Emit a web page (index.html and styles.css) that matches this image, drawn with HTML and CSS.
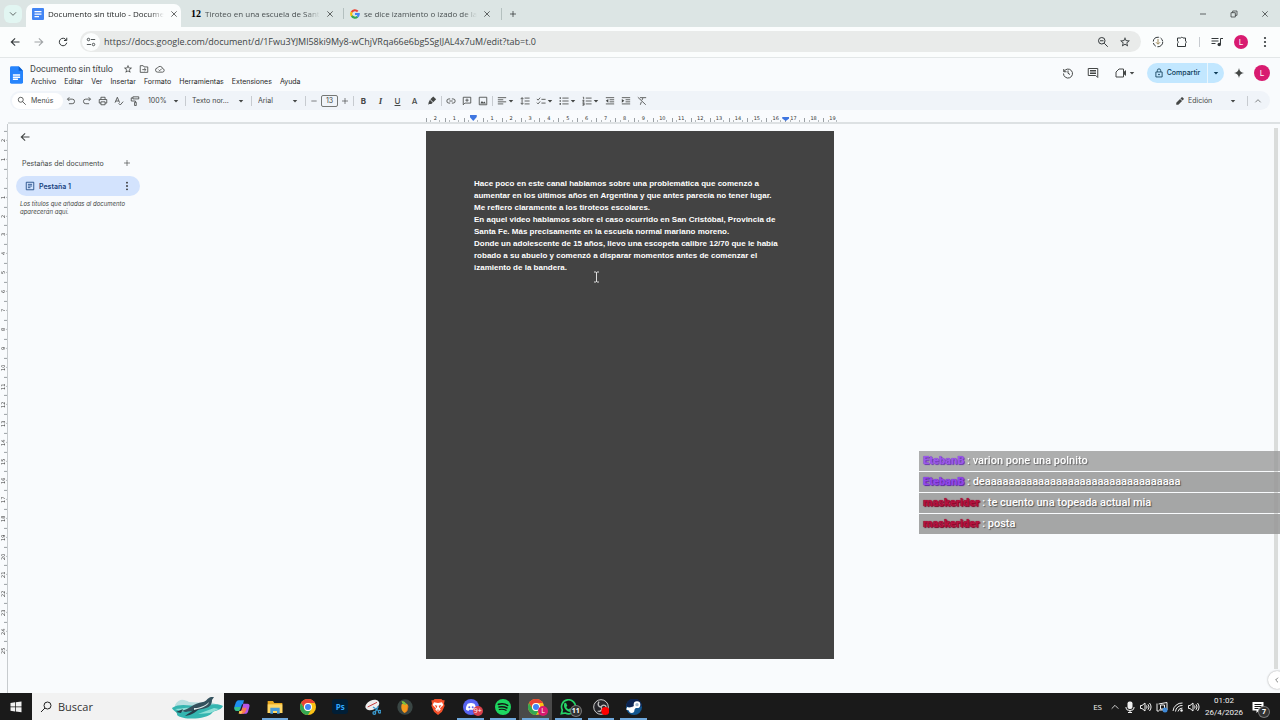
FILE: index.html
```html
<!DOCTYPE html>
<html lang="es">
<head>
<meta charset="UTF-8" />
<meta name="viewport" content="width=device-width, initial-scale=1" />
<title>Documento sin título - Documentos de Google</title>
<link rel="stylesheet" href="styles.css">
</head>
<body>
  <svg class="sprite" aria-hidden="true">
    <symbol id="down" viewBox="0 0 24 24"><path class="ln" d="M3 7l9 9 9-9" stroke-width="4"/></symbol>
    <symbol id="left" viewBox="0 0 24 24"><path class="ln" d="M15 5l-7 7 7 7"/></symbol>
    <symbol id="up" viewBox="0 0 24 24"><path class="ln" d="M4 16l8-8 8 8"/></symbol>
    <symbol id="caret" viewBox="0 0 24 24"><path d="M3 8h18l-9 10z"/></symbol>
    <symbol id="close" viewBox="0 0 24 24"><path class="ln" d="M4 4l16 16M20 4L4 20" stroke-width="3"/></symbol>
    <symbol id="plus" viewBox="0 0 24 24"><path class="ln" d="M12 3v18M3 12h18"/></symbol>
    <symbol id="minus" viewBox="0 0 24 24"><path class="ln" d="M4 12h16"/></symbol>
    <symbol id="back" viewBox="0 0 24 24"><path d="M21 10.800H7.400l5.600-5.400L11.500 4 3 12l8.500 8 1.500-1.400-5.600-5.400H21z"/></symbol>
    <symbol id="reload" viewBox="0 0 24 24"><path class="ln" d="M18.500 8A7.500 7.500 0 1 0 19.500 13.500M19.500 3.500V9H14"/></symbol>
    <symbol id="tune" viewBox="0 0 24 24"><g class="ln"><circle cx="6" cy="6" r="3"/><path d="M12 6h10M2 18h10"/><circle cx="18" cy="18" r="3"/></g></symbol>
    <symbol id="star" viewBox="0 0 24 24"><path d="M22 9.240l-7.190-.62L12 2 9.190 8.630 2 9.240l5.460 4.730L5.820 21 12 17.270 18.180 21l-1.630-7.030L22 9.240zM12 15.400l-3.760 2.270 1-4.280-3.320-2.880 4.380-.38L12 6.100l1.710 4.040 4.380.38-3.320 2.880 1 4.280L12 15.400z"/></symbol>
    <symbol id="search" viewBox="0 0 24 24"><g class="ln"><circle cx="9" cy="9" r="6"/><path d="M13 13l8 8"/></g></symbol>
    <symbol id="zoomout" viewBox="0 0 24 24"><g class="ln"><circle cx="9.500" cy="9.500" r="6.500"/><path d="M14.500 14.500l7 7M6 9.500h7"/></g></symbol>
    <symbol id="download" viewBox="0 0 24 24"><g class="ln"><circle cx="12" cy="12" r="9.500" stroke-dasharray="16 3 8 3"/><path d="M12 6v10M8 12.500l4 4 4-4" stroke="#a08a5a"/></g></symbol>
    <symbol id="puzzle" viewBox="0 0 24 24"><path class="ln" d="M3 4h6a3 3 0 0 1 5 0h5v6a3 3 0 0 1 0 5v6H3v-6a3 3 0 0 0 0-5z"/></symbol>
    <symbol id="playlist" viewBox="0 0 24 24"><g class="ln"><path d="M1 5h14M1 10h14M1 15h8M19 17V5h5"/></g><circle cx="16.500" cy="17" r="3.500"/></symbol>
    <symbol id="dots" viewBox="0 0 24 24"><circle cx="12" cy="4" r="2.200"/><circle cx="12" cy="12" r="2.200"/><circle cx="12" cy="20" r="2.200"/></symbol>
    <symbol id="winmin" viewBox="0 0 24 24"><path class="ln" d="M3 12h18"/></symbol>
    <symbol id="winmax" viewBox="0 0 24 24"><path class="ln" d="M3 8h13v13H3zM8 8V3h13v13h-5"/></symbol>
    <symbol id="docfile" viewBox="0 0 18 24"><path fill="#2684fc" d="M2 0h10l6 6v16a2 2 0 0 1-2 2H2a2 2 0 0 1-2-2V2a2 2 0 0 1 2-2z"/><path fill="#0a60d0" d="M12 0l6 6h-6z"/><path fill="#fff" d="M4 11h10v2H4zM4 14h10v2H4zM4 17h7v2H4z"/></symbol>
    <symbol id="docfav" viewBox="0 0 24 24"><rect width="24" height="24" rx="2" fill="#4285f4"/><path fill="#fff" d="M5 6h14v2.500H5zM5 11h14v2.500H5zM5 16h9v2.500H5z"/></symbol>
    <symbol id="google" viewBox="0 0 24 24"><g fill="none" stroke-width="5"><path stroke="#ea4335" d="M4 7.500A9 9 0 0 1 18.500 6"/><path stroke="#fbbc05" d="M4.500 17A9 9 0 0 1 4 7.500"/><path stroke="#34a853" d="M18 18.500A9 9 0 0 1 4.300 16.500"/><path stroke="#4285f4" d="M12 12h9a9 9 0 0 1-3.200 6.700"/></g></symbol>
    <symbol id="move" viewBox="0 0 24 24"><path class="ln" d="M3 4h7l2 3h9v13H3zM8 13.500h8M13 10l3.500 3.500L13 17"/></symbol>
    <symbol id="cloud" viewBox="0 0 24 24"><path class="ln" d="M6.500 19.500a5 5 0 0 1-.5-10 6.500 6.500 0 0 1 12.300 1.500 4.300 4.300 0 0 1 .2 8.500zM8.500 13.500l2.700 2.700 5-5"/></symbol>
    <symbol id="history" viewBox="0 0 24 24"><path class="ln" d="M3.500 4v5.500H9M4 9a9 9 0 1 1-1 4M12 7v5.500l4 2.500"/></symbol>
    <symbol id="comment" viewBox="0 0 24 24"><path class="ln" d="M2.500 3h19v18l-4-4h-15zM6 7h12M6 10h12M6 13h12"/></symbol>
    <symbol id="video" viewBox="0 0 24 24"><path class="ln" d="M8 4h9v16H2V10z"/><path d="M17 10l5-4v12l-5-4z"/></symbol>
    <symbol id="lock" viewBox="0 0 24 24"><path class="ln" d="M4.500 9.500h15v12h-15zM8 9V6a4 4 0 0 1 8 0v3"/><circle cx="12" cy="15.500" r="2"/></symbol>
    <symbol id="spark" viewBox="0 0 24 24"><path d="M12 0c1 7 5 11 12 12-7 1-11 5-12 12-1-7-5-11-12-12C7 11 11 7 12 0z"/></symbol>
    <symbol id="undo" viewBox="0 0 24 24"><path class="ln" d="M8 3L3.500 7.500 8 12M4 7.500h11a5.500 5.500 0 0 1 0 11H7"/></symbol>
    <symbol id="redo" viewBox="0 0 24 24"><path class="ln" d="M16 3l4.500 4.500L16 12M20 7.500H9a5.500 5.500 0 0 0 0 11h8"/></symbol>
    <symbol id="print" viewBox="0 0 24 24"><path class="ln" d="M7 8V3h10v5M7 17H3V8.500h18V17h-4M7 14h10v7H7z"/></symbol>
    <symbol id="spell" viewBox="0 0 24 24"><path class="ln" d="M2.500 16L8 3l5.500 13M4.500 12h7M11 17.500l4 4 7-8"/></symbol>
    <symbol id="paint" viewBox="0 0 24 24"><path class="ln" d="M7 2h14v5H7zM7 4.500H3V12h10v3M11 15h4v8h-4z"/></symbol>
    <symbol id="marker" viewBox="0 0 24 24"><path d="M15 1l7 7-7 7-7-7zM7 9l7 7-4 3H6l-3 2 1-6z"/></symbol>
    <symbol id="link" viewBox="0 0 24 24"><path class="ln" d="M10 7H7a5 5 0 0 0 0 10h3M14 7h3a5 5 0 0 1 0 10h-3M8 12h8"/></symbol>
    <symbol id="addcomment" viewBox="0 0 24 24"><path class="ln" d="M3 3h18v14H7l-4 4zM12 6v8M8 10h8"/></symbol>
    <symbol id="image" viewBox="0 0 24 24"><path class="ln" d="M3 3h18v18H3z"/><path d="M5.500 18l4-6 3 4 2.500-3 4 5z"/></symbol>
    <symbol id="align" viewBox="0 0 24 24"><path class="ln" d="M2 4h20M2 9h13M2 14h20M2 19h13"/></symbol>
    <symbol id="spacing" viewBox="0 0 24 24"><path class="ln" d="M11 5h12M11 12h12M11 19h12M5 4v16M1.500 7.500L5 4l3.500 3.500M1.500 16.500L5 20l3.500-3.500"/></symbol>
    <symbol id="checks" viewBox="0 0 24 24"><path class="ln" d="M2 7l3 3 5-6M2 16l3 3 5-6M13 8h10M13 17h10"/></symbol>
    <symbol id="bullets" viewBox="0 0 24 24"><path class="ln" d="M8 5h15M8 12h15M8 19h15"/><circle cx="3" cy="5" r="2"/><circle cx="3" cy="12" r="2"/><circle cx="3" cy="19" r="2"/></symbol>
    <symbol id="numbers" viewBox="0 0 24 24"><path class="ln" d="M9 5h14M9 12h14M9 19h14"/><path class="ln" d="M2 3h2v5M1 10.500h4l-3 4h4M1 17h4v5H1M2 19.500h3"/></symbol>
    <symbol id="outdent" viewBox="0 0 24 24"><path class="ln" d="M2 4h20M11 9h11M11 14h11M2 19h20"/><path d="M8 7v9l-6-4.500z"/></symbol>
    <symbol id="indent" viewBox="0 0 24 24"><path class="ln" d="M2 4h20M11 9h11M11 14h11M2 19h20"/><path d="M2 7v9l6-4.500z"/></symbol>
    <symbol id="clear" viewBox="0 0 24 24"><path class="ln" d="M7 4h15M14 5l-2 5M10.500 14L8 21M2 3l19 18"/></symbol>
    <symbol id="pencil" viewBox="0 0 24 24"><path d="M3 21v-5L12 7l5 5-9 9zM13 6l3-3h2l3 3v2l-3 3z"/></symbol>
    <symbol id="tabdoc" viewBox="0 0 24 24"><path class="ln" d="M3 3h18v18H3zM7 8h10M7 12h10M7 16h6"/></symbol>
    <symbol id="volume" viewBox="0 0 24 24"><path class="ln" d="M1 9h3l6-5v16l-6-5H1zM13 9a5 5 0 0 1 0 6M16 6.500a9 9 0 0 1 0 11M19 4a13 13 0 0 1 0 16"/></symbol>
  </svg>

  <header class="tabstrip">
    <button class="tab-search" aria-label="Buscar pestañas"><svg class="i8"><use href="#down"/></svg></button>
    <div class="tabs">
      <div class="tab active">
        <svg class="i12"><use href="#docfav"/></svg>
        <span class="tab-title">Documento sin título - Docume</span>
        <button aria-label="Cerrar"><svg class="i8"><use href="#close"/></svg></button>
      </div>
      <div class="tab">
        <b class="fav12">12</b>
        <span class="tab-title">Tiroteo en una escuela de Sant</span>
        <button aria-label="Cerrar"><svg class="i8"><use href="#close"/></svg></button>
      </div>
      <div class="tab">
        <svg class="i10"><use href="#google"/></svg>
        <span class="tab-title">se dice izamiento o izado de la</span>
        <button aria-label="Cerrar"><svg class="i8"><use href="#close"/></svg></button>
      </div>
    </div>
    <button class="new-tab" aria-label="Nueva pestaña"><svg class="i8"><use href="#plus"/></svg></button>
    <div class="win-buttons">
      <button aria-label="Minimizar"><svg class="i8"><use href="#winmin"/></svg></button>
      <button aria-label="Restaurar"><svg class="i8"><use href="#winmax"/></svg></button>
      <button aria-label="Cerrar ventana"><svg class="i8"><use href="#close"/></svg></button>
    </div>
  </header>

  <div class="navbar">
    <button aria-label="Atrás"><svg class="i12"><use href="#back"/></svg></button>
    <button class="forward" aria-label="Adelante"><svg class="i12"><use href="#back"/></svg></button>
    <button aria-label="Recargar"><svg class="i12"><use href="#reload"/></svg></button>
    <div class="omnibox">
      <button class="site-info" aria-label="Información del sitio"><svg class="i10"><use href="#tune"/></svg></button>
      <input type="text" aria-label="Dirección" value="https://docs.google.com/document/d/1Fwu3YJMl58ki9My8-wChjVRqa66e6bg5SgIJAL4x7uM/edit?tab=t.0" />
      <button aria-label="Zoom"><svg class="i12"><use href="#zoomout"/></svg></button>
      <button aria-label="Favoritos"><svg class="i12"><use href="#star"/></svg></button>
    </div>
    <div class="nav-right">
      <button aria-label="Descargas"><svg class="i12"><use href="#download"/></svg></button>
      <button aria-label="Extensiones"><svg class="i12"><use href="#puzzle"/></svg></button>
      <span class="sep"></span>
      <button aria-label="Multimedia"><svg class="i12"><use href="#playlist"/></svg></button>
      <button aria-label="Perfil"><span class="avatar small">L</span></button>
      <button aria-label="Menú"><svg class="i12"><use href="#dots"/></svg></button>
    </div>
  </div>

  <div class="docs-header">
    <svg class="docs-logo"><use href="#docfile"/></svg>
    <div class="docs-title">
      <div class="title-row">
        <h1>Documento sin título</h1>
        <button aria-label="Destacar"><svg class="i10"><use href="#star"/></svg></button>
        <button aria-label="Mover"><svg class="i10"><use href="#move"/></svg></button>
        <button aria-label="Estado"><svg class="i10"><use href="#cloud"/></svg></button>
      </div>
      <nav>
        <a href="#">Archivo</a>
        <a href="#">Editar</a>
        <a href="#">Ver</a>
        <a href="#">Insertar</a>
        <a href="#">Formato</a>
        <a href="#">Herramientas</a>
        <a href="#">Extensiones</a>
        <a href="#">Ayuda</a>
      </nav>
    </div>
    <div class="docs-actions">
      <button class="wide-btn" aria-label="Historial"><svg class="i12"><use href="#history"/></svg></button>
      <button class="wide-btn" aria-label="Comentarios"><svg class="i12"><use href="#comment"/></svg></button>
      <button class="meet" aria-label="Reunión"><svg class="i12"><use href="#video"/></svg><svg class="i6"><use href="#caret"/></svg></button>
      <div class="share">
        <button class="share-main"><svg class="i10"><use href="#lock"/></svg>Compartir</button>
        <button class="share-more" aria-label="Más opciones"><svg class="i6"><use href="#caret"/></svg></button>
      </div>
      <button class="gemini" aria-label="Gemini"><svg class="i10"><use href="#spark"/></svg></button>
      <button aria-label="Cuenta"><span class="avatar">L</span></button>
    </div>
  </div>

  <div class="toolbar">
    <button class="menus"><svg class="i10"><use href="#search"/></svg>Menús</button>
    <button aria-label="Deshacer"><svg><use href="#undo"/></svg></button>
    <button aria-label="Rehacer"><svg><use href="#redo"/></svg></button>
    <button aria-label="Imprimir"><svg><use href="#print"/></svg></button>
    <button aria-label="Ortografía"><svg><use href="#spell"/></svg></button>
    <button aria-label="Copiar formato"><svg><use href="#paint"/></svg></button>
    <label class="drop zoom"><select aria-label="Zoom"><option>100%</option></select><svg class="i6"><use href="#caret"/></svg></label>
    <span class="sep"></span>
    <label class="drop wide"><select aria-label="Estilos"><option>Texto nor...</option></select><svg class="i6"><use href="#caret"/></svg></label>
    <span class="sep"></span>
    <label class="drop"><select aria-label="Fuente"><option>Arial</option></select><svg class="i6"><use href="#caret"/></svg></label>
    <span class="sep"></span>
    <button class="step" aria-label="Reducir"><svg class="i8"><use href="#minus"/></svg></button>
    <input class="size" type="text" aria-label="Tamaño de fuente" value="13" />
    <button class="step" aria-label="Aumentar"><svg class="i8"><use href="#plus"/></svg></button>
    <span class="sep"></span>
    <button class="glyph"><b>B</b></button>
    <button class="glyph"><i>I</i></button>
    <button class="glyph"><u>U</u></button>
    <button class="glyph">A</button>
    <button class="glyph" aria-label="Resaltar"><svg><use href="#marker"/></svg></button>
    <span class="sep"></span>
    <button aria-label="Enlace"><svg><use href="#link"/></svg></button>
    <button aria-label="Añadir comentario"><svg><use href="#addcomment"/></svg></button>
    <button aria-label="Imagen"><svg><use href="#image"/></svg></button>
    <span class="sep"></span>
    <button class="split" aria-label="Alinear"><svg><use href="#align"/></svg><svg class="i6"><use href="#caret"/></svg></button>
    <button aria-label="Interlineado"><svg><use href="#spacing"/></svg></button>
    <button class="split" aria-label="Lista de control"><svg><use href="#checks"/></svg><svg class="i6"><use href="#caret"/></svg></button>
    <button class="split" aria-label="Viñetas"><svg><use href="#bullets"/></svg><svg class="i6"><use href="#caret"/></svg></button>
    <button class="split" aria-label="Numeración"><svg><use href="#numbers"/></svg><svg class="i6"><use href="#caret"/></svg></button>
    <button aria-label="Reducir sangría"><svg><use href="#outdent"/></svg></button>
    <button aria-label="Aumentar sangría"><svg><use href="#indent"/></svg></button>
    <button aria-label="Borrar formato"><svg><use href="#clear"/></svg></button>
    <div class="mode">
      <svg><use href="#pencil"/></svg>
      <label class="drop"><select aria-label="Modo"><option>Edición</option></select><svg class="i6"><use href="#caret"/></svg></label>
      <span class="sep"></span>
      <button aria-label="Ocultar menús"><svg class="i8"><use href="#up"/></svg></button>
    </div>
  </div>

  <div class="ruler-row"><div class="ruler" id="rulerH"></div></div>

  <main>
    <div class="ruler-side"><div class="ruler" id="rulerV"></div></div>
    <aside>
      <button class="aside-back" aria-label="Cerrar panel"><svg class="i12"><use href="#back"/></svg></button>
      <div class="aside-head">
        <h2>Pestañas del documento</h2>
        <button aria-label="Añadir pestaña"><svg class="i8"><use href="#plus"/></svg></button>
      </div>
      <div class="doc-tab">
        <svg class="i10"><use href="#tabdoc"/></svg>
        <a href="#">Pestaña 1</a>
        <button aria-label="Opciones"><svg class="i10"><use href="#dots"/></svg></button>
      </div>
      <p>Los títulos que añadas al documento aparecerán aquí.</p>
    </aside>
    <article>
      <p>Hace poco en este canal hablamos sobre una problemática que comenzó a<br>aumentar en los últimos años en Argentina y que antes parecía no tener lugar.<br>Me refiero claramente a los tiroteos escolares.</p>
      <p>En aquel video hablamos sobre el caso ocurrido en San Cristóbal, Provincia de<br>Santa Fe. Más precisamente en la escuela normal mariano moreno.</p>
      <p>Donde un adolescente de 15 años, llevo una escopeta calibre 12/70 que le había<br>robado a su abuelo y comenzó a disparar momentos antes de comenzar el<br>izamiento de la bandera.</p>
      <svg class="cursor" viewBox="0 0 7 12"><path d="M1 1h2l.5.5L4 1h2M3.500 1v10M1 11h2l.5-.5.5.5h2"/></svg>
    </article>
    <div class="scrollbar"></div>
    <button class="panel-toggle" aria-label="Mostrar panel"><svg class="i8"><use href="#left"/></svg></button>
    <ul class="chat">
      <li class="old"><b class="purple">EtebanB</b> : varion pone una polnito</li>
      <li><b class="purple">EtebanB</b> : deaaaaaaaaaaaaaaaaaaaaaaaaaaaaaaaaa</li>
      <li><b class="red">maskerider</b> : te cuento una topeada actual mia</li>
      <li><b class="red">maskerider</b> : posta</li>
    </ul>
  </main>

  <footer>
    <button class="start" aria-label="Inicio"><svg class="i12" viewBox="0 0 24 24"><path d="M1 4l9-1.500V11H1zM11.500 2.300L23 1v10H11.500zM1 12.500h9V21l-9-1.500zM11.500 12.500H23v10l-11.500-1.500z"/></svg></button>
    <label class="search">
      <svg viewBox="0 0 24 24"><circle cx="15" cy="9" r="7"/><path d="M10 14l-8 8"/></svg>
      <input type="text" placeholder="Buscar" />
      <svg class="penguin" viewBox="0 0 52 24">
        <path fill="#b9dfe0" d="M3 10c4-7 9-6 14-3l20 1c5-1 9 2 10 6H3z"/>
        <path fill="#35b5b0" d="M0 13c8-5 17-2 25-2s20-4 26 0c-2 5-9 4-11 7-4 6-28 8-35 2 1-3-4-4-5-7z"/>
        <path fill="#8fe0d8" d="M3 14c6 0 10-2 15-1l-7 4zM26 19l16-6 5 1-9 4z"/>
        <path fill="#34525e" d="M9 16c8-1 12-8 22-9 3 0 4-4 8-5l3 0-2 3c0 4-2 7-6 8-7 2-15 3-20 4z"/>
        <path fill="#263e4a" d="M24 12c-2 4-8 6-11 9 7-1 12-4 15-9zM4 17l7-3-2 4z"/>
        <path fill="#d8e6e6" d="M22 13c5 0 11-2 15-6-1 4-7 6-15 8z"/>
      </svg>
    </label>
    <div class="apps">
      <button aria-label="Copilot"><svg viewBox="0 0 24 24"><path fill="#1d8ff0" d="M7 2h8l-4 14H3c-3 0-3-3-2-6l2-5c1-2 2-3 4-3z"/><path fill="#36c28b" d="M1 12h9l-2 6H4c-3 0-4-3-3-6z"/><path fill="#b455e6" d="M13 7h7c3 0 4 2 3 5l-2 7c-1 2-2 3-4 3H9z"/><path fill="#fa7850" d="M12 13h7l-2 7-3 2H9z"/><path fill="#fbc84a" d="M8 18h5l-2 4H7z"/><path fill="#1a1a1a" d="M12 8h2l-3 9H9z"/></svg></button>
      <button class="running" aria-label="Explorador"><svg viewBox="0 0 24 24"><path fill="#e9a820" d="M1 3h8l2 3h12v15H1z"/><path fill="#ffd766" d="M1 8h22v13H1z"/><path fill="#4a9bd8" d="M5 13h14v9h-4v-4H9v4H5z"/></svg></button>
      <button aria-label="Chrome"><svg viewBox="0 0 24 24" id="chrome"><circle cx="12" cy="12" r="12" fill="#fbc116"/><path fill="#ea4335" d="M1.600 6A12 12 0 0 1 22.400 6H12a6 6 0 0 0-5.200 9z"/><path fill="#34a853" d="M1.600 6l5.200 9A6 6 0 0 0 17.200 15L12 24A12 12 0 0 1 1.600 6z"/><circle cx="12" cy="12" r="6" fill="#fff"/><circle cx="12" cy="12" r="4.500" fill="#4285f4"/></svg></button>
      <button aria-label="Photoshop"><span class="ps">Ps</span></button>
      <button aria-label="Recortes"><svg viewBox="0 0 24 24"><ellipse cx="11" cy="9" rx="11" ry="7" transform="rotate(-25 11 9)" fill="#eee"/><path stroke="#c83c3c" stroke-width="1.500" d="M4 12l14-7"/><g fill="none" stroke="#3b9bd0" stroke-width="2"><path d="M12 12l9 6M20 11l-5 9"/><circle cx="14" cy="21" r="2"/><circle cx="22" cy="19" r="2"/></g></svg></button>
      <button aria-label="FL Studio"><svg viewBox="0 0 24 24"><circle cx="12" cy="12" r="11.500" fill="#3a4644"/><path fill="#f49a1c" d="M7 8c5-3 9-1 10 3 0 5-2 9-6 10-5-3-5-9-4-13z"/><path fill="#d8621a" d="M12 21c3-3 5-8 3-13 3 4 2 11-3 13z"/><path fill="#7bbf3f" d="M7 3c4 0 6 2 7 6-4 0-7-2-7-6z"/></svg></button>
      <button aria-label="Brave"><svg viewBox="0 0 24 24"><path fill="#f4502a" d="M7 0h10l2 2h3l-1 5 1 3-4 9-6 5-6-5-4-9 1-3-1-5h3z"/><path fill="#fff" d="M6 5l6 1 6-1 2 4-5 5 1 2-4 3-4-3 1-2-5-5z"/><path fill="#f4502a" d="M7 9l4 1-1 4zM17 9l-4 1 1 4zM10 16h4l-2 2z"/></svg></button>
      <button class="running" aria-label="Discord"><svg viewBox="0 0 24 24"><circle cx="12" cy="12" r="12" fill="#5865f2"/><path fill="#fff" d="M7 7c3-1.500 7-1.500 10 0 2 3 3 6 2.500 9L16 18l-1.500-2h-5L8 18l-3.500-2C4 13 5 10 7 7z"/><circle cx="9.500" cy="12.500" r="1.500" fill="#5865f2"/><circle cx="14.500" cy="12.500" r="1.500" fill="#5865f2"/></svg><span class="badge red-badge">9+</span></button>
      <button class="running" aria-label="Spotify"><svg viewBox="0 0 24 24"><circle cx="12" cy="12" r="12" fill="#1ed760"/><g fill="none" stroke="#141414" stroke-linecap="round"><path stroke-width="2.500" d="M5 8c5-1.500 10-1 14 1.500"/><path stroke-width="2.200" d="M6 12c4-1 8-.6 12 1.500"/><path stroke-width="1.800" d="M6.500 15.800c4-.9 7-.5 10 1.200"/></g></svg></button>
      <button class="running current" aria-label="Chrome, perfil L"><svg viewBox="0 0 24 24"><circle cx="12" cy="12" r="12" fill="#fbc116"/><path fill="#ea4335" d="M1.600 6A12 12 0 0 1 22.400 6H12a6 6 0 0 0-5.200 9z"/><path fill="#34a853" d="M1.600 6l5.200 9A6 6 0 0 0 17.200 15L12 24A12 12 0 0 1 1.600 6z"/><circle cx="12" cy="12" r="6" fill="#fff"/><circle cx="12" cy="12" r="4.500" fill="#4285f4"/></svg><span class="badge pink-badge">L</span></button>
      <button class="running" aria-label="WhatsApp"><svg viewBox="0 0 24 24"><path fill="#141414" stroke="#25d366" stroke-width="2.500" d="M2 22l1.500-5.500A10.500 10.500 0 1 1 8 21z"/><path fill="#25d366" d="M7 6l2-.5L11 10l-1.500 2c1 2 2 3 4 3.500L15 14l4 2c0 3-3 4-5 3-5-1-8-6-8-9 0-2 0-3 1-4z"/></svg><span class="badge dark-badge">11</span></button>
      <button class="running" aria-label="OBS"><svg viewBox="0 0 24 24"><circle cx="12" cy="12" r="11" fill="#26262b" stroke="#c9c9c9" stroke-width="1.500"/><g fill="none" stroke="#c0c0c0" stroke-width="2"><path d="M9 4c-3 5 0 8 3 8M12 12c2-4 7-4 8 1M12 12c3 3 0 8-5 6"/></g><circle cx="18.500" cy="18" r="6" fill="#f00"/></svg></button>
      <button class="running" aria-label="Steam"><svg viewBox="0 0 24 24"><circle cx="12" cy="12" r="12" fill="#12568f"/><path fill="#0b2350" d="M0 11a12 12 0 0 1 24 0L12 14z"/><path stroke="#fff" stroke-width="4" d="M1 14l8 3 6-7"/><circle cx="16.500" cy="8.500" r="5" fill="#fff"/><circle cx="8.500" cy="17" r="4" fill="#fff"/><circle cx="16.500" cy="8.500" r="2.500" fill="#9db4c8"/></svg></button>
    </div>
    <div class="tray">
      <span class="lang">ES</span>
      <svg class="i10"><use href="#up"/></svg>
      <svg class="i12" viewBox="0 0 24 24"><rect x="7" y="1" width="10" height="15" rx="4"/><path class="ln" d="M4 12v2a8 5 0 0 0 16 0v-2M12 19v4M8 23h8"/></svg>
      <svg class="i12"><use href="#volume"/></svg>
      <svg class="i12" viewBox="0 0 24 24"><path class="ln" d="M5 6l17-3v15H6M2 5v15h4M9 8h8v8H9z"/><circle cx="18" cy="18" r="5" fill="#3f8ad8"/></svg>
      <svg class="i12" viewBox="0 0 24 24"><path class="ln" d="M2 20A18 18 0 0 1 21 4M7 21A13 13 0 0 1 21 9M12 21a9 9 0 0 1 9-7"/><circle cx="19" cy="19" r="2.500"/></svg>
      <svg class="i12"><use href="#volume"/></svg>
      <time>01:02<br>26/4/2026</time>
      <div class="notif"><svg class="i12" viewBox="0 0 24 24"><path fill="#fff" d="M1 2h22v17h-9l-5 5v-5H1z"/><path stroke="#1a1a1a" stroke-width="2" d="M5 7h14M5 11h14M5 15h8"/></svg><span class="badge dark-badge">7</span></div>
    </div>
  </footer>

  <script>
    // one cell per centimetre, 0 is the margin marker
    function drawRuler(id, last) {
      const ruler = document.getElementById(id);
      for (let n = -2; n <= last; n++) {
        const cell = document.createElement('span');
        cell.textContent = n === 0 ? '' : Math.abs(n);
        if (n === 0) cell.classList.add('zero');
        if (n === 17) cell.classList.add('end');
        ruler.appendChild(cell);
      }
    }
    drawRuler('rulerH', 19);
    drawRuler('rulerV', 25);
  </script>
</body>
</html>
```
FILE: styles.css
```css
* { box-sizing: border-box; }
body {
  margin: 0;
  height: 100vh;
  display: flex;
  flex-direction: column;
  overflow: hidden;
  font-family: Inter, Roboto, sans-serif;
  font-size: 7px;
  background: #f9fbfd;
  color: #444746;
}
button, input, select {
  font: inherit;
  color: inherit;
  background: none;
  border: none;
  padding: 0;
  margin: 0;
  outline: none;
}
button {
  display: flex;
  align-items: center;
  justify-content: center;
  flex-shrink: 0;
}
a { color: inherit; text-decoration: none; }
h1, h2, p, ul { margin: 0; padding: 0; }
svg { fill: currentColor; flex-shrink: 0; display: block; }
.ln { fill: none; stroke: currentColor; stroke-width: 2px; }
.sprite { position: absolute; width: 0; height: 0; }
.i6 { width: 6px; height: 6px; }
.i8 { width: 8px; height: 8px; }
.i10 { width: 10px; height: 10px; }
.i12 { width: 12px; height: 12px; }
.sep { width: 1px; height: 10px; background: #c7cbd0; flex-shrink: 0; }

/* browser tabs */
.tabstrip {
  display: flex;
  align-items: center;
  height: 27px;
  padding-left: 4px;
  background: #dce5e4;
  color: #1f2222;
  font-family: "Open Sans", "Noto Sans", sans-serif;
  font-size: 8px;
}
.tabstrip .ln { stroke-width: 3px; }
.tab-search {
  width: 18px;
  height: 18px;
  border-radius: 6px;
  background: #e2f6f2;
}
.tabs { display: flex; align-self: flex-end; margin-left: 4px; }
.tab {
  display: flex;
  align-items: center;
  gap: 4px;
  width: 158px;
  height: 23px;
  padding: 0 8px 4px 6px;
  color: #4a5152;
}
.tab.active {
  width: 155px;
  margin-right: 4px;
  padding: 0 5px 4px 6px;
  border-radius: 7px 7px 0 0;
  background: #fbfdfd;
  color: #1f2222;
}
.tab button { width: 12px; height: 12px; color: #1f2222; }
.tab-title {
  flex: 1;
  white-space: nowrap;
  mask-image: linear-gradient(to right, #000 88%, transparent);
}
.tab + .tab + .tab { background: linear-gradient(#b4c0bf, #b4c0bf) 0 4px / 1px 11px no-repeat; padding-left: 7px; }
.fav12 { width: 11px; font-family: "Liberation Serif", serif; font-size: 10px; color: #000; }
.new-tab { width: 22px; height: 12px; border-left: 1px solid #b4c0bf; }
.win-buttons { display: flex; margin-left: auto; }
.win-buttons button { width: 31px; height: 27px; }

/* address bar */
.navbar {
  display: flex;
  align-items: center;
  height: 31px;
  padding: 0 3px 1px 3px;
  background: #fbfdfd;
  border-bottom: 1px solid #e3e7e8;
  color: #33383a;
}
.navbar > button { width: 24px; height: 20px; }
.forward { transform: scaleX(-1); color: #a0a4a6; }
.omnibox {
  flex: 1;
  display: flex;
  align-items: center;
  gap: 2px;
  height: 21px;
  margin-left: 5px;
  padding: 0 6px 0 2px;
  border-radius: 11px;
  background: #e9ebea;
}
.omnibox button { width: 20px; height: 18px; }
.omnibox .site-info { width: 18px; background: #fbfdfd; border-radius: 50%; margin-right: 2px; }
.omnibox input { flex: 1; font-family: "Open Sans", "Noto Sans", sans-serif; font-size: 9px; color: #404546; }
.nav-right { display: flex; align-items: center; margin-left: 5px; }
.nav-right button { width: 24px; height: 20px; }
.nav-right .sep { margin: 0 5px; }
.avatar {
  width: 16px;
  height: 16px;
  border-radius: 50%;
  background: #d81b70;
  color: #fff;
  font-size: 8px;
  line-height: 16px;
  text-align: center;
}
.avatar.small { width: 14px; height: 14px; line-height: 14px; }

/* docs header */
.docs-header { display: flex; align-items: center; height: 33px; padding: 0 10px; }
.docs-logo { width: 13px; height: 18px; margin-right: 7px; }
.docs-title { display: flex; flex-direction: column; gap: 2px; }
.title-row { display: flex; align-items: center; gap: 6px; height: 12px; }
h1 { font-family: Roboto, sans-serif; font-size: 9px; font-weight: 400; margin-right: 4px; }
nav { display: flex; gap: 8px; padding-left: 1px; line-height: 9px; color: #1f1f1f; }
.docs-actions { display: flex; align-items: center; margin: 0 0 4px auto; gap: 9px; }
.docs-actions > button { height: 20px; }
.wide-btn { width: 16px; }
.meet { gap: 2px; margin-left: 5px; }
.gemini { width: 12px; }
.share {
  display: flex;
  height: 20px;
  margin-left: 3px;
  border-radius: 10px;
  overflow: hidden;
  background: #c2e7ff;
  color: #0b3a56;
  font-weight: 500;
}
.share-main { gap: 3px; width: 61px; border-right: 1px solid #eaf6fd; }
.share-more { width: 16px; }

/* toolbar */
.toolbar {
  display: flex;
  align-items: center;
  height: 19px;
  margin: 0 10px;
  padding-left: 2px;
  border-radius: 10px;
  background: #f0f4f9;
}
.toolbar svg { width: 10px; height: 10px; }
.toolbar svg.i6 { width: 6px; height: 6px; }
.toolbar svg.i8 { width: 8px; height: 8px; }
.toolbar button { width: 16px; height: 16px; }
.toolbar button.menus {
  width: 51px;
  gap: 4px;
  justify-content: flex-start;
  padding-left: 5px;
  background: #fff;
  border-radius: 8px;
}
.toolbar button.step { width: 14px; }
.toolbar button.split { width: 23px; gap: 1px; }
.toolbar button.glyph { width: 17px; }
.toolbar .sep { margin: 0 1px; }
.drop { display: flex; align-items: center; width: 51px; padding: 0 6px 0 5px; }
.drop select { flex: 1; min-width: 0; appearance: none; }
.drop.zoom { width: 41px; padding: 0 5px; }
.drop.wide { width: 63px; }
.size { width: 17px; height: 12px; border: 1px solid #747775; border-radius: 2px; text-align: center; }
.glyph { font-size: 8px; font-weight: 500; }
.glyph b { font-weight: 700; }
.glyph i { font-family: "Liberation Serif", serif; font-size: 9px; font-weight: 700; }
.mode { display: flex; align-items: center; margin-left: auto; padding-right: 4px; }
.mode .drop { width: 60px; padding: 0 9px 0 3px; }
.mode .sep { margin: 0 2px; }

/* rulers */
.ruler-row {
  display: flex;
  justify-content: center;
  height: 14px;
  margin-left: 8px;
  padding-right: 20px;
  border-bottom: 2px solid #dde1e3;
}
.ruler { display: flex; font-family: "DejaVu Sans", sans-serif; font-size: 5px; color: #333; }
.ruler span {
  flex: 1;
  text-align: center;
  background:
    linear-gradient(#9aa0a4, #9aa0a4) 0 100% / 1px 4px no-repeat,
    linear-gradient(#b4b9bc, #b4b9bc) 25% 100% / 1px 2px no-repeat,
    linear-gradient(#b4b9bc, #b4b9bc) 75% 100% / 1px 2px no-repeat;
}
#rulerH { width: 416px; padding-top: 5px; line-height: 6px; }
#rulerH .zero::before, #rulerH .end::before {
  content: "";
  display: block;
  width: 7px;
  height: 6px;
  margin: 0 auto;
  background: #3f76e0;
  clip-path: polygon(0 0, 100% 0, 100% 35%, 50% 100%, 0 35%);
}
#rulerH .end { display: flex; }
#rulerH .end::before { height: 4px; margin: 2px 1px 0 -3px; }
#rulerV { flex-direction: column; width: 7px; height: 529px; }
#rulerV span {
  writing-mode: vertical-rl;
  transform: rotate(180deg);
  line-height: 7px;
  background:
    linear-gradient(#9aa0a4, #9aa0a4) 0 100% / 3px 1px no-repeat,
    linear-gradient(#b4b9bc, #b4b9bc) 0 50% / 1px 1px no-repeat;
}

/* workspace */
main {
  position: relative;
  flex: 1;
  min-height: 0;
  display: grid;
  grid-template-columns: 8px 1fr 408px 1fr;
  align-items: start;
  padding-right: 28px;
}
.ruler-side { height: 100%; padding-top: 7px; border-right: 1px solid #c7cbce; }
aside { width: 132px; margin-left: 8px; padding-top: 7px; }
.aside-back { width: 18px; height: 12px; }
.aside-head {
  display: flex;
  align-items: center;
  justify-content: space-between;
  width: 110px;
  height: 14px;
  margin: 13px 0 6px 6px;
}
h2 { font-size: 7px; font-weight: 400; }
.aside-head button { width: 10px; }
.doc-tab {
  display: flex;
  align-items: center;
  gap: 4px;
  width: 124px;
  height: 20px;
  padding: 0 8px 0 9px;
  border-radius: 10px;
  background: #d3e3fd;
  color: #17427f;
  font-weight: 600;
}
.doc-tab button { margin-left: auto; color: #333; }
aside p { padding: 4px 0 0 4px; font-size: 6px; line-height: 8px; font-style: italic; }
article {
  position: relative;
  height: 528px;
  margin-top: 7px;
  padding: 47px 48px;
  background: #434343;
  color: #fff;
  font-family: "Liberation Sans", Arial, sans-serif;
  font-size: 8px;
  font-weight: 700;
  line-height: 12px;
  white-space: nowrap;
}
.cursor { position: absolute; left: 167px; top: 140px; width: 7px; height: 12px; fill: none; stroke: #ddd; }
.scrollbar { position: absolute; right: 2px; top: 4px; bottom: 24px; width: 4px; background: #dadcdb; }
.panel-toggle {
  position: absolute;
  right: -6px;
  bottom: 4px;
  width: 18px;
  height: 18px;
  border-radius: 50%;
  background: #fff;
  box-shadow: 0 0 2px #999;
}

/* stream chat over the page */
.chat {
  position: absolute;
  right: 0;
  top: 327px;
  width: 361px;
  display: flex;
  flex-direction: column;
  gap: 1px;
  list-style: none;
  font-family: Roboto, sans-serif;
  font-size: 11px;
  font-weight: 500;
  color: #fff;
  text-shadow: 1px 1px 1px #555;
}
.chat li { height: 20px; padding-left: 4px; line-height: 19px; background: rgba(150, 150, 150, .85); }
.chat .old { opacity: .9; }
.chat b { font-weight: 900; }
.purple { color: #9147e8; text-shadow: 0 0 1px #5a1fa8, 1px 1px 1px #5a1fa8; }
.red { color: #b3123f; text-shadow: 0 0 1px #7a0024, 1px 1px 1px #7a0024; }

/* taskbar */
footer {
  display: flex;
  align-items: stretch;
  height: 27px;
  background: #1a1a1a;
  color: #f0f0f0;
  font-family: "Open Sans", sans-serif;
}
.start { width: 32px; }
.search {
  display: flex;
  align-items: center;
  width: 192px;
  padding-left: 8px;
  background: #f2f2f2;
  color: #222;
}
.search svg { width: 12px; height: 12px; fill: none; stroke: #222; stroke-width: 2px; }
.search input { flex: 1; min-width: 0; margin-left: 6px; font-size: 11px; }
.search input::placeholder { color: #333; }
.search .penguin { width: 52px; height: 24px; stroke: none; }
.apps { display: flex; width: 424px; margin-left: 2px; }
.apps button { position: relative; flex: 1; }
.apps svg { width: 16px; height: 16px; }
.apps .running::after {
  content: "";
  position: absolute;
  left: 3px;
  right: 3px;
  bottom: 0;
  height: 2px;
  background: #6fa8dc;
}
.apps .current { background: #4a4a4a; }
.ps { width: 16px; height: 15px; border-radius: 3px; background: #001e36; color: #31a8ff; font-weight: 700; font-size: 8px; line-height: 15px; }
.badge {
  position: absolute;
  right: 4px;
  bottom: 4px;
  min-width: 10px;
  height: 10px;
  border-radius: 5px;
  font-size: 7px;
  line-height: 10px;
  text-align: center;
  color: #fff;
}
.red-badge { background: #d9414d; }
.pink-badge { background: #d81b70; }
.dark-badge { background: #333; font-weight: 700; box-shadow: 0 0 0 1px #777; }
.tray { display: flex; align-items: center; margin-left: auto; padding-right: 14px; gap: 4px; }
.lang { font-size: 8px; margin-right: 4px; }
time { width: 40px; font-family: Roboto, sans-serif; font-size: 8px; line-height: 12px; text-align: center; }
.notif { position: relative; margin-left: 2px; padding: 0 2px; }
.notif .badge { right: -3px; bottom: -4px; }
```
